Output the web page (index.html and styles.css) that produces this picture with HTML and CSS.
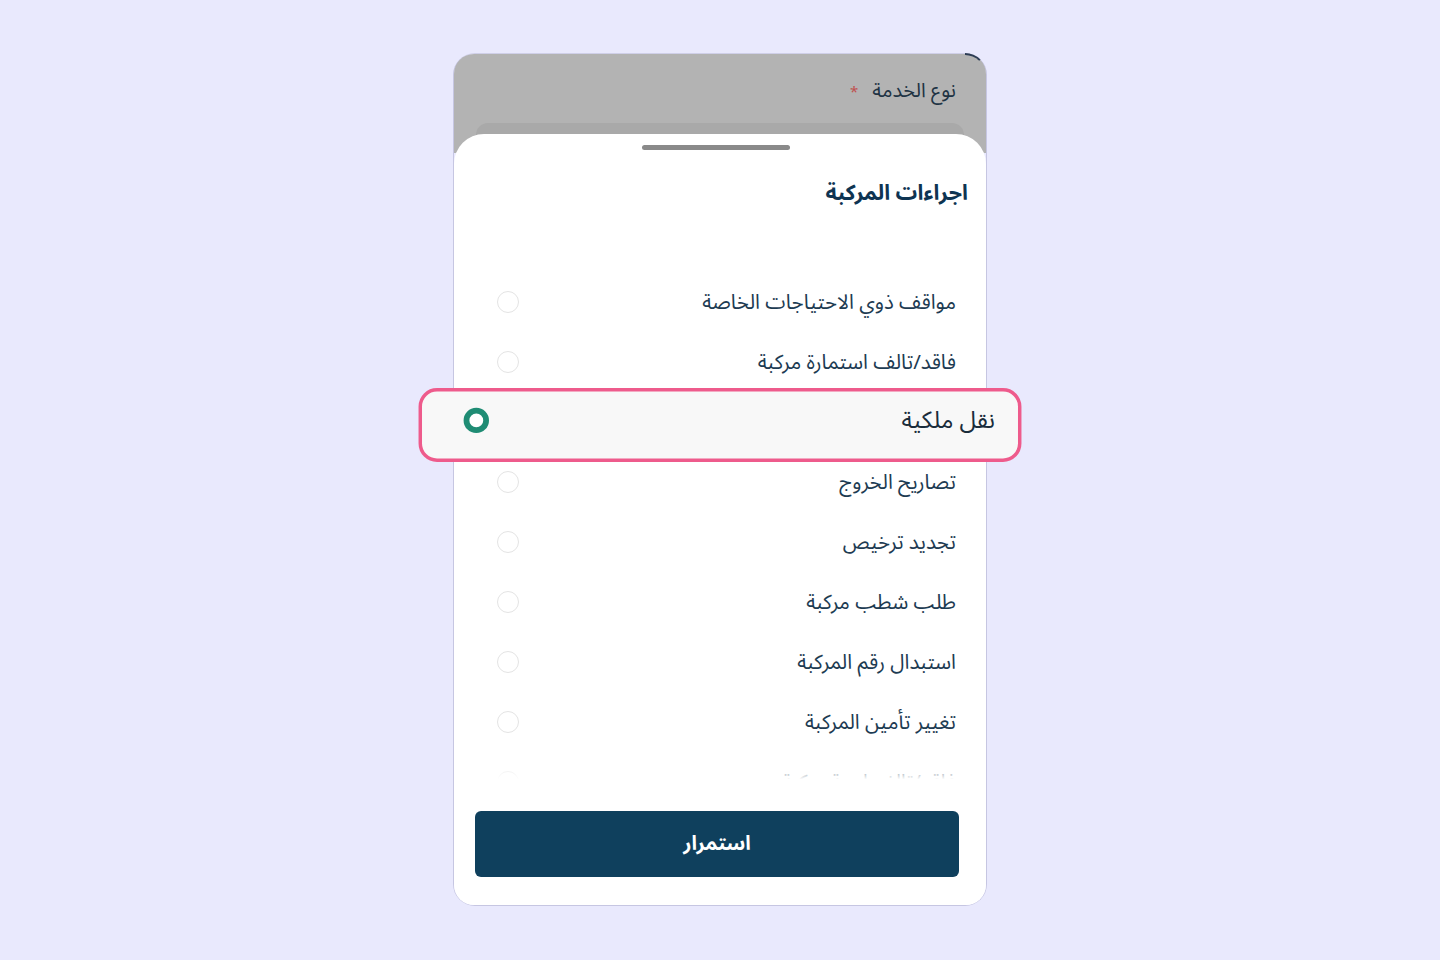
FILE: index.html
```html
<!DOCTYPE html>
<html lang="ar" dir="rtl">
	<head>
		<meta charset="utf-8">
		<title>اجراءات المركبة</title>
		<link rel="stylesheet" href="styles.css">
	</head>
	<body>
		<div class="phone">
			<div class="form-head">
				<span class="label">نوع الخدمة</span><span class="req">*</span>
			</div>
			<div class="field-edge"></div>
			<div class="sheet">
				<div class="handle"></div>
				<h2 class="sheet-title">اجراءات المركبة</h2>
				<ul class="options">
					<li class="option"><span>مواقف ذوي الاحتياجات الخاصة</span><i class="radio"></i></li>
					<li class="option"><span>فاقد/تالف استمارة مركبة</span><i class="radio"></i></li>
					<li class="option selected"><span>نقل ملكية</span><i class="radio"></i></li>
					<li class="option"><span>تصاريح الخروج</span><i class="radio"></i></li>
					<li class="option"><span>تجديد ترخيص</span><i class="radio"></i></li>
					<li class="option"><span>طلب شطب مركبة</span><i class="radio"></i></li>
					<li class="option"><span>استبدال رقم المركبة</span><i class="radio"></i></li>
					<li class="option"><span>تغيير تأمين المركبة</span><i class="radio"></i></li>
					<li class="option"><span>فاقد/تالف لوحة مركبة</span><i class="radio"></i></li>
				</ul>
				<button class="btn-next">استمرار</button>
			</div>
		</div>
	</body>
</html>
```

FILE: styles.css
```css
html,body,ul,li,h2 {margin: 0;padding: 0;}
li {list-style: none;}
body {
	background: #e9e9fd;
	font-family: "Noto Sans Arabic", "DejaVu Sans", sans-serif;
	display: flex;
	justify-content: center;
	padding-top: 53px;
	height: 960px;
	box-sizing: border-box;
}
.phone {
	width: 534px;
	height: 853px;
	box-sizing: border-box;
	border: 1.5px solid #c6c6e2;
	border-top-color: #cfcfe8;
	border-radius: 22px;
	display: flex;
	flex-direction: column;
}
.form-head {
	position: relative;
	background: #b3b3b3;
	border-radius: 20px 20px 0 0;
	height: 69px;
	padding: 16px 30px 0 0;
	box-sizing: border-box;
	color: #1f3344;
	font-size: 20px;
}
/* dark edge on the top right corner */
.form-head::before {
	content: "";
	position: absolute;
	top: -1px;
	right: -1px;
	width: 22px;
	height: 22px;
	box-sizing: border-box;
	border-top: 2px solid #2d3d55;
	border-right: 2px solid transparent;
	border-top-right-radius: 22px;
}
.req {color: #c0504f;margin-right: 14px;font-size: 15px;}
.field-edge {
	background: #b3b3b3;
	height: 30px;
	margin-bottom: -19px;
	padding: 0 22px;
}
.field-edge::before {
	content: "";
	display: block;
	height: 30px;
	background: #a9a9a9;
	border-radius: 12px 12px 0 0;
}
.sheet {
	flex: 1;
	position: relative;
	background: #fff;
	border-radius: 30px 30px 20px 20px;
	display: flex;
	flex-direction: column;
}
.handle {
	width: 148px;
	height: 5px;
	border-radius: 3px;
	background: #8a8a8a;
	margin: 11px auto 0 188px;
}
.sheet-title {
	font-size: 21.5px;
	line-height: 28px;
	font-weight: bold;
	color: #0e3452;
	margin: 29px 18px 0 0;
}
.options {
	margin-top: 65px;
	height: 514px;
	position: relative;
	clip-path: inset(-60px -120px 0 -120px);
}
.options::after {
	content: "";
	position: absolute;
	left: 0;
	right: 0;
	bottom: 0;
	height: 22px;
	background: linear-gradient(rgba(255,255,255,0.2), #fff 70%);
}
.option {
	height: 60px;
	margin: 0 5px;
	padding: 0 25px 0 38px;
	display: flex;
	align-items: center;
	justify-content: space-between;
	font-size: 20.5px;
	color: #1d3b52;
	box-sizing: border-box;
}
.radio {
	width: 22px;
	height: 22px;
	box-sizing: border-box;
	border: 1.5px solid #e4e4e4;
	border-radius: 50%;
}
.option.selected {
	position: relative;
	z-index: 2;
	height: 64px;
	margin: -2px 5px;
	padding: 0 20px 8px 36px;
	background: #f8f8f8;
	border: 3.5px solid #ee5b8c;
	border-radius: 16px;
	transform: translateY(3px) scale(1.155);
	color: #1a2c3b;
}
.option.selected .radio {
	border: 5px solid #1f8c74;
	background: #fff;
}
.btn-next {
	margin: 25px 27px 0 21px;
	height: 66px;
	border: none;
	border-radius: 6px;
	background: #0f405d;
	color: #fff;
	font-family: inherit;
	font-size: 20px;
	font-weight: bold;
}
```
